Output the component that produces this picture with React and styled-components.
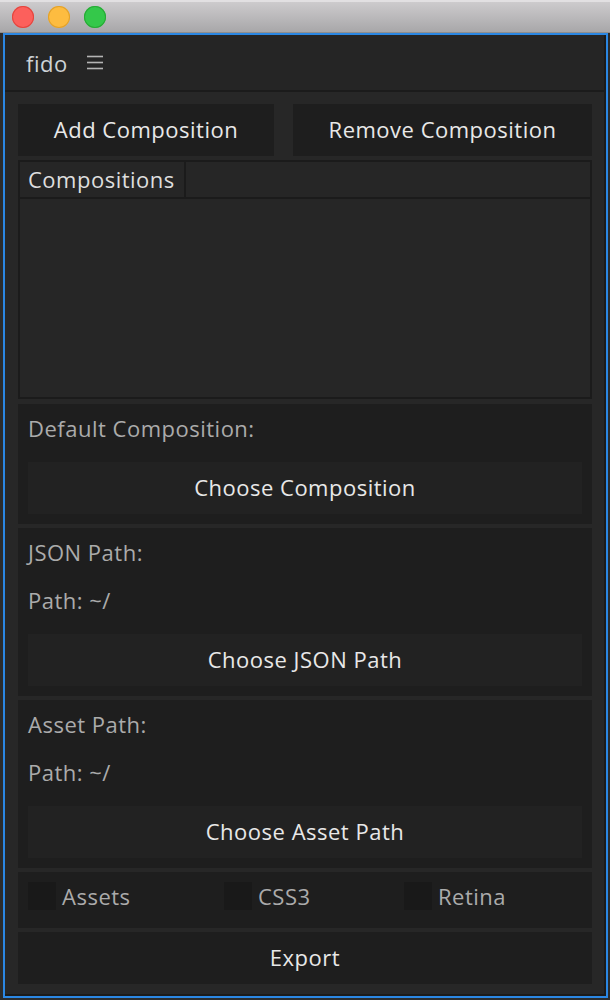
import React from "react";
import styled, { createGlobalStyle } from "styled-components";

const Global = createGlobalStyle`
  html, body { margin: 0; padding: 0; }
  body {
    background: #2c2c2c;
    font-family: "Open Sans", "DejaVu Sans", sans-serif;
    width: 610px;
    height: 1000px;
    overflow: hidden;
  }
`;

const Window = styled.div`
  display: flex;
  flex-direction: column;
  height: 1000px;
`;

const TitleBar = styled.div`
  height: 33px;
  flex: none;
  display: flex;
  align-items: center;
  gap: 14px;
  padding-left: 12px;
  box-sizing: border-box;
  border-top: 2px solid #e2e0e2;
  border-bottom: 1px solid #8e8e8e;
  background: linear-gradient(#cdcbcd, #a8a7a9);
`;

const Light = styled.span`
  width: 22px;
  height: 22px;
  border-radius: 50%;
  background: ${(p) => p.$color};
  box-shadow: inset 0 0 0 1px ${(p) => p.$edge};
`;

const Frame = styled.div`
  margin: 0 2px 0 3px;
  border: 2px solid #2b87e3;
`;

const Panel = styled.div`
  background: #272727;
  border-right: 2px solid #1b1b1b;
  border-bottom: 2px solid #1b1b1b;
  display: flex;
  flex-direction: column;
`;

const Header = styled.div`
  height: 55px;
  display: flex;
  align-items: center;
  gap: 19px;
  padding-left: 21px;
  background: #252525;
  border-bottom: 2px solid #1b1b1b;
`;

const Title = styled.span`
  font-size: 22px;
  letter-spacing: 0.5px;
  color: #cdd2d6;
  line-height: 28px;
`;

const Body = styled.div`
  display: flex;
  flex-direction: column;
  gap: 4px;
  padding: 12px 12px 10px 13px;
`;

const ButtonRow = styled.div`
  display: flex;
  gap: 19px;
`;

const Button = styled.button`
  flex: ${(p) => p.$grow || "1 1 auto"};
  height: 52px;
  border: none;
  margin: 0;
  padding: 0 0 2px;
  background: ${(p) => (p.$inner ? "#222222" : "#1e1e1e")};
  color: #e8e8e8;
  font-family: inherit;
  font-size: 22px;
  letter-spacing: 0.5px;
  text-align: center;
`;

const Table = styled.div`
  box-sizing: border-box;
  height: 239px;
  border: 2px solid #1b1b1b;
  background: #262626;
  display: flex;
  flex-direction: column;
  margin-bottom: 1px;
`;

const TableHead = styled.div`
  display: flex;
  height: 35px;
  border-bottom: 2px solid #1b1b1b;
`;

const HeadCell = styled.div`
  width: 156px;
  padding-left: 8px;
  line-height: 35px;
  font-size: 22px;
  letter-spacing: 0.5px;
  color: #dedede;
  border-right: 2px solid #1b1b1b;
`;

const Section = styled.div`
  background: #1e1e1e;
  padding: 10px;
  display: flex;
  flex-direction: column;
  gap: 20px;
`;

const Label = styled.div`
  font-size: 22px;
  letter-spacing: 0.5px;
  line-height: 28px;
  color: #ababab;
`;

const CheckRow = styled.div`
  box-sizing: border-box;
  background: #1e1e1e;
  height: 56px;
  padding: 10px 10px 0;
  display: grid;
  grid-template-columns: 196px 180px auto;
  align-items: start;
`;

const CheckItem = styled.label`
  display: flex;
  align-items: center;
  gap: 6px;
  font-size: 22px;
  letter-spacing: 0.5px;
  line-height: 26px;
  color: #ababab;
`;

const Box = styled.span`
  width: 28px;
  height: 28px;
  background: #191919;
`;

const Menu = () => (
  <svg width="16" height="15" viewBox="0 0 16 15">
    <g stroke="#b4b4b4" strokeWidth="1.6">
      <line x1="0" y1="1.5" x2="16" y2="1.5" />
      <line x1="0" y1="7.5" x2="16" y2="7.5" />
      <line x1="0" y1="13.5" x2="16" y2="13.5" />
    </g>
  </svg>
);

export default function App() {
  return (
    <Window>
      <Global />
      <TitleBar>
        <Light $color="#fc605c" $edge="#e2463f" />
        <Light $color="#fdbc40" $edge="#e1a12c" />
        <Light $color="#34c84a" $edge="#27aa35" />
      </TitleBar>
      <Frame>
        <Panel>
          <Header>
            <Title>fido</Title>
            <Menu />
          </Header>
          <Body>
            <ButtonRow>
              <Button $grow="0 0 256px">Add Composition</Button>
              <Button $grow="0 0 299px">Remove Composition</Button>
            </ButtonRow>
            <Table>
              <TableHead>
                <HeadCell>Compositions</HeadCell>
              </TableHead>
            </Table>
            <Section>
              <Label>Default Composition:</Label>
              <Button $inner>Choose Composition</Button>
            </Section>
            <Section>
              <Label>JSON Path:</Label>
              <Label>Path: ~/</Label>
              <Button $inner>Choose JSON Path</Button>
            </Section>
            <Section>
              <Label>Asset Path:</Label>
              <Label>Path: ~/</Label>
              <Button $inner>Choose Asset Path</Button>
            </Section>
            <CheckRow>
              <CheckItem><Box />Assets</CheckItem>
              <CheckItem><Box />CSS3</CheckItem>
              <CheckItem><Box />Retina</CheckItem>
            </CheckRow>
            <Button>Export</Button>
          </Body>
        </Panel>
      </Frame>
    </Window>
  );
}
